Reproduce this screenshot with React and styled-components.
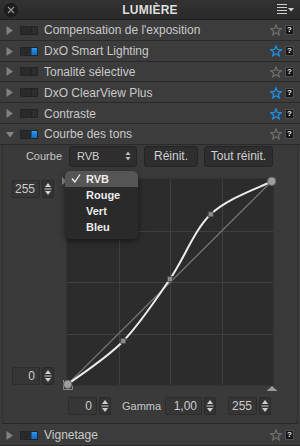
import styled, { createGlobalStyle } from 'styled-components'

const GlobalStyle = createGlobalStyle`
  html, body { margin: 0; padding: 0; background: #2b2b2b; overflow: hidden; }
  body { font-family: "Liberation Sans", Arial, sans-serif; }
`

const Palette = styled.div`
  width: 300px;
  height: 446px;
  display: flex;
  flex-direction: column;
  background: #3b3b3b;
  overflow: hidden;
`

const Header = styled.header`
  height: 20px;
  flex: none;
  box-sizing: border-box;
  border-bottom: 1px solid #202020;
  background: linear-gradient(#333333, #292929);
  display: grid;
  grid-template-columns: 40px 1fr 40px;
  align-items: center;
`

const CloseBtn = styled.span`
  width: 14px;
  height: 14px;
  margin-left: 4px;
  border-radius: 50%;
  background: #1d1d1d;
  display: flex;
  align-items: center;
  justify-content: center;
`

const Title = styled.h1`
  margin: 0;
  text-align: center;
  font-size: 12px;
  font-weight: bold;
  color: #dedede;
  letter-spacing: 0.2px;
`

const MenuBtn = styled.span`
  justify-self: end;
  margin-right: 5px;
  display: flex;
`

const Row = styled.div`
  height: ${p => p.$h || 20.8}px;
  flex: none;
  box-sizing: border-box;
  border-bottom: 1px solid #2a2a2a;
  background: #3c3c3c;
  display: flex;
  align-items: center;
  padding: 1px 6px 0 6px;
`

const Arrow = styled.svg`
  width: 8px;
  height: 9px;
  flex: none;
`

const Toggle = styled.span`
  width: 18px;
  height: 9px;
  margin-left: 6px;
  flex: none;
  box-sizing: border-box;
  background: #2a2a2a;
  border: 1px solid #242424;
  display: flex;
  justify-content: flex-end;
  &::after {
    content: '';
    width: 6px;
    box-sizing: border-box;
    background: ${p => (p.$on ? 'linear-gradient(#2a9af0, #0a6bc2)' : '#2d2d2d')};
    border-left: 1px solid ${p => (p.$on ? '#0a5aa0' : '#222')};
  }
`

const Label = styled.span`
  flex: 1;
  margin-left: 6px;
  font-size: 12px;
  color: #c9c9c9;
  white-space: nowrap;
`

const Star = styled.svg`
  width: 12px;
  height: 12px;
  flex: none;
`

const Help = styled.span`
  width: 9px;
  height: 10px;
  margin-left: 3px;
  box-sizing: border-box;
  flex: none;
  background: #161616;
  border: 1px solid #4e4e4e;
  color: #eeeeee;
  font-size: 8px;
  font-weight: bold;
  line-height: 8px;
  text-align: center;
`

const Content = styled.section`
  flex: 1;
  display: flex;
  flex-direction: column;
  box-sizing: border-box;
  margin: 0 2px;
  padding-top: 1px;
  border-left: 1px solid #313131;
  border-right: 1px solid #313131;
  border-bottom: 1px solid #262626;
  background: #3a3a3a;
`

const Controls = styled.div`
  display: flex;
  align-items: center;
  height: 21px;
  padding-left: 15px;
`

const ControlLabel = styled.span`
  width: 44px;
  text-align: right;
  font-size: 11px;
  color: #c6c6c6;
  margin-right: 7px;
`

const SelectWrap = styled.div`
  position: relative;
  margin-right: 7px;
`

const Select = styled.div`
  width: 68px;
  height: 21px;
  box-sizing: border-box;
  padding: 0 5px 0 7px;
  display: flex;
  align-items: center;
  justify-content: space-between;
  background: #2e2e2e;
  border: 1px solid #252525;
  border-radius: 3px;
  font-size: 11px;
  color: #d0d0d0;
`

const Button = styled.button`
  height: 21px;
  width: ${p => p.$w}px;
  margin-right: ${p => p.$mr || 0}px;
  padding: 0;
  box-sizing: border-box;
  background: #2e2e2e;
  border: 1px solid #252525;
  border-radius: 3px;
  font-family: inherit;
  font-size: 12px;
  color: #cfcfcf;
`

const Popup = styled.ul`
  position: absolute;
  left: -4px;
  top: 25px;
  width: 73px;
  margin: 0;
  padding: 0 0 4px;
  list-style: none;
  background: #2a2a2a;
  border-radius: 5px;
  box-shadow: 0 2px 6px rgba(0, 0, 0, 0.5);
  z-index: 5;
`

const PopupItem = styled.li`
  height: 16px;
  display: flex;
  align-items: center;
  padding-left: 6px;
  font-size: 11px;
  font-weight: bold;
  color: #ececec;
  background: ${p => (p.$active ? '#555555' : 'transparent')};
  border-radius: ${p => (p.$active ? '5px 5px 0 0' : '0')};
`

const Check = styled.span`
  width: 15px;
  display: flex;
`

const CurveArea = styled.div`
  display: flex;
  margin-top: 8px;
  height: 218px;
`

const LeftCol = styled.div`
  width: 57px;
  box-sizing: border-box;
  padding: 5px 0 8px 9px;
  display: flex;
  flex-direction: column;
  justify-content: space-between;
`

const NumGroup = styled.div`
  display: flex;
  align-items: center;
  gap: 2px;
  margin-right: ${p => p.$mr || 0}px;
`

const NumBox = styled.div`
  width: ${p => p.$w}px;
  height: 18px;
  box-sizing: border-box;
  padding-right: 4px;
  background: #363636;
  border: 1px solid #2c2c2c;
  border-radius: 2px;
  font-size: 12px;
  line-height: 16px;
  text-align: right;
  color: #cccccc;
`

const Spinner = styled.svg`
  width: 12px;
  height: 18px;
  flex: none;
`

const Chart = styled.svg`
  width: 222px;
  height: 218px;
  flex: none;
  overflow: visible;
`

const BottomRow = styled.div`
  display: flex;
  align-items: center;
  height: 18px;
  margin-top: 4px;
  padding-left: 65px;
`

const Gamma = styled.span`
  font-size: 11px;
  color: #c6c6c6;
  width: 43px;
  margin-left: 11px;
`

const starPoints = (() => {
  const pts = []
  for (let i = 0; i < 10; i++) {
    const r = i % 2 ? 2.4 : 5.5
    const a = -Math.PI / 2 + (i * Math.PI) / 5
    pts.push(`${(6 + r * Math.cos(a)).toFixed(2)},${(6.4 + r * Math.sin(a)).toFixed(2)}`)
  }
  return pts.join(' ')
})()

function StarIcon({ blue }) {
  return (
    <Star viewBox="0 0 12 12">
      <polygon points={starPoints} fill="none" stroke={blue ? '#1e8fe6' : '#6c6c6c'} strokeWidth="1.3" />
    </Star>
  )
}

function ArrowIcon({ open }) {
  return (
    <Arrow viewBox="0 0 8 9">
      {open
        ? <polygon points="0,2 8,2 4,7.5" fill="#858585" />
        : <polygon points="0.5,0 7,4.5 0.5,9" fill="#808080" />}
    </Arrow>
  )
}

function PanelRow({ label, on, blue, open, h }) {
  return (
    <Row $h={h}>
      <ArrowIcon open={open} />
      <Toggle $on={on} />
      <Label>{label}</Label>
      <StarIcon blue={blue} />
      <Help>?</Help>
    </Row>
  )
}

function SpinnerIcon() {
  return (
    <Spinner viewBox="0 0 12 18">
      <rect x="0.5" y="0.5" width="11" height="17" rx="1.5" fill="#333" stroke="#2a2a2a" />
      <polygon points="3,7 9,7 6,3" fill="#cfcfcf" />
      <line x1="2.5" y1="9" x2="9.5" y2="9" stroke="#cfcfcf" strokeWidth="1" />
      <polygon points="3,11 9,11 6,15" fill="#cfcfcf" />
    </Spinner>
  )
}

function NumberField({ value, w, mr }) {
  return (
    <NumGroup $mr={mr}>
      <NumBox $w={w}>{value}</NumBox>
      <SpinnerIcon />
    </NumGroup>
  )
}

// catmull-rom through the curve's control points
function splinePath(p) {
  let d = `M${p[0][0]},${p[0][1]}`
  for (let i = 0; i < p.length - 1; i++) {
    const p0 = p[i - 1] || p[i]
    const p1 = p[i]
    const p2 = p[i + 1]
    const p3 = p[i + 2] || p2
    const c1 = [p1[0] + (p2[0] - p0[0]) / 6, p1[1] + (p2[1] - p0[1]) / 6]
    const c2 = [p2[0] - (p3[0] - p1[0]) / 6, p2[1] - (p3[1] - p1[1]) / 6]
    d += ` C${c1[0].toFixed(1)},${c1[1].toFixed(1)} ${c2[0].toFixed(1)},${c2[1].toFixed(1)} ${p2[0]},${p2[1]}`
  }
  return d
}

const curvePts = [[7.7, 209.3], [63.3, 166], [110, 104], [150.7, 39.3], [211.7, 6.3]]

function CurveChart() {
  const gx = 7
  const gy = 4
  const gs = 206
  const ticks = [1, 2, 3].map(i => Math.round(gs * i / 4) + 0.5)
  return (
    <Chart viewBox="0 0 222 218">
      <rect x={gx - 0.5} y={gy - 0.5} width={gs + 1} height={gs + 1} fill="#2c2c2c" stroke="#333" />
      {ticks.map(t => (
        <g key={t}>
          <line x1={gx + t} y1={gy} x2={gx + t} y2={gy + gs} stroke="#3f3f3f" />
          <line x1={gx} y1={gy + t} x2={gx + gs} y2={gy + t} stroke="#3f3f3f" />
        </g>
      ))}
      <polygon points="2,2 6.5,6 2,10" fill="#8a8a8a" />
      <polygon points="206.5,216 217.5,216 212,211" fill="#9a9a9a" />
      <line x1={curvePts[0][0]} y1={curvePts[0][1]} x2={curvePts[4][0]} y2={curvePts[4][1]} stroke="#757575" strokeWidth="1.2" />
      <path d={splinePath(curvePts)} fill="none" stroke="#ececec" strokeWidth="2" />
      <path d="M3.5,205 V214.5 H12.5 V211" fill="none" stroke="#8a8a8a" strokeWidth="1" />
      {curvePts.slice(1, 4).map(([x, y]) => (
        <rect key={x} x={x - 2.5} y={y - 2.5} width="5" height="5" fill="#8c8c8c" stroke="#444" strokeWidth="0.8" />
      ))}
      <circle cx={curvePts[0][0]} cy={curvePts[0][1]} r="4.2" fill="#9d9d9d" stroke="#5c5c5c" />
      <circle cx={curvePts[4][0]} cy={curvePts[4][1]} r="4.2" fill="#9d9d9d" stroke="#5c5c5c" />
    </Chart>
  )
}

const rows = [
  { label: "Compensation de l'exposition", on: false, blue: false },
  { label: 'DxO Smart Lighting', on: true, blue: true },
  { label: 'Tonalité sélective', on: false, blue: false },
  { label: 'DxO ClearView Plus', on: false, blue: true },
  { label: 'Contraste', on: false, blue: true },
]

export default function App() {
  return (
    <Palette>
      <GlobalStyle />
      <Header>
        <CloseBtn>
          <svg width="8" height="8" viewBox="0 0 8 8">
            <path d="M1,1 L7,7 M7,1 L1,7" stroke="#9a9a9a" strokeWidth="1.1" />
          </svg>
        </CloseBtn>
        <Title>LUMIÈRE</Title>
        <MenuBtn>
          <svg width="18" height="12" viewBox="0 0 18 12">
            <path d="M0,0.5 H10 M0,3.5 H10 M0,6.5 H10 M0,9.5 H10" stroke="#cfcfcf" strokeWidth="1" />
            <polygon points="11,4 17,4 14,7.5" fill="#cfcfcf" />
          </svg>
        </MenuBtn>
      </Header>

      {rows.map(r => <PanelRow key={r.label} {...r} />)}
      <PanelRow label="Courbe des tons" on open />

      <Content>
        <Controls>
          <ControlLabel>Courbe</ControlLabel>
          <SelectWrap>
            <Select>
              <span>RVB</span>
              <svg width="6" height="10" viewBox="0 0 6 10">
                <polygon points="0.5,4 5.5,4 3,0.5" fill="#bdbdbd" />
                <polygon points="0.5,6 5.5,6 3,9.5" fill="#bdbdbd" />
              </svg>
            </Select>
            <Popup>
              <PopupItem $active>
                <Check>
                  <svg width="10" height="9" viewBox="0 0 10 9">
                    <path d="M1,4.5 L3.8,8 L9,0.5" fill="none" stroke="#f0f0f0" strokeWidth="1.3" />
                  </svg>
                </Check>
                RVB
              </PopupItem>
              <PopupItem><Check />Rouge</PopupItem>
              <PopupItem><Check />Vert</PopupItem>
              <PopupItem><Check />Bleu</PopupItem>
            </Popup>
          </SelectWrap>
          <Button $w={54} $mr={6}>Réinit.</Button>
          <Button $w={69}>Tout réinit.</Button>
        </Controls>

        <CurveArea>
          <LeftCol>
            <NumberField value="255" w={28} />
            <NumberField value="0" w={28} />
          </LeftCol>
          <CurveChart />
        </CurveArea>

        <BottomRow>
          <NumberField value="0" w={29} />
          <Gamma>Gamma</Gamma>
          <NumberField value="1,00" w={37} mr={12} />
          <NumberField value="255" w={29} />
        </BottomRow>
      </Content>

      <PanelRow label="Vignetage" on h={22} />
    </Palette>
  )
}
